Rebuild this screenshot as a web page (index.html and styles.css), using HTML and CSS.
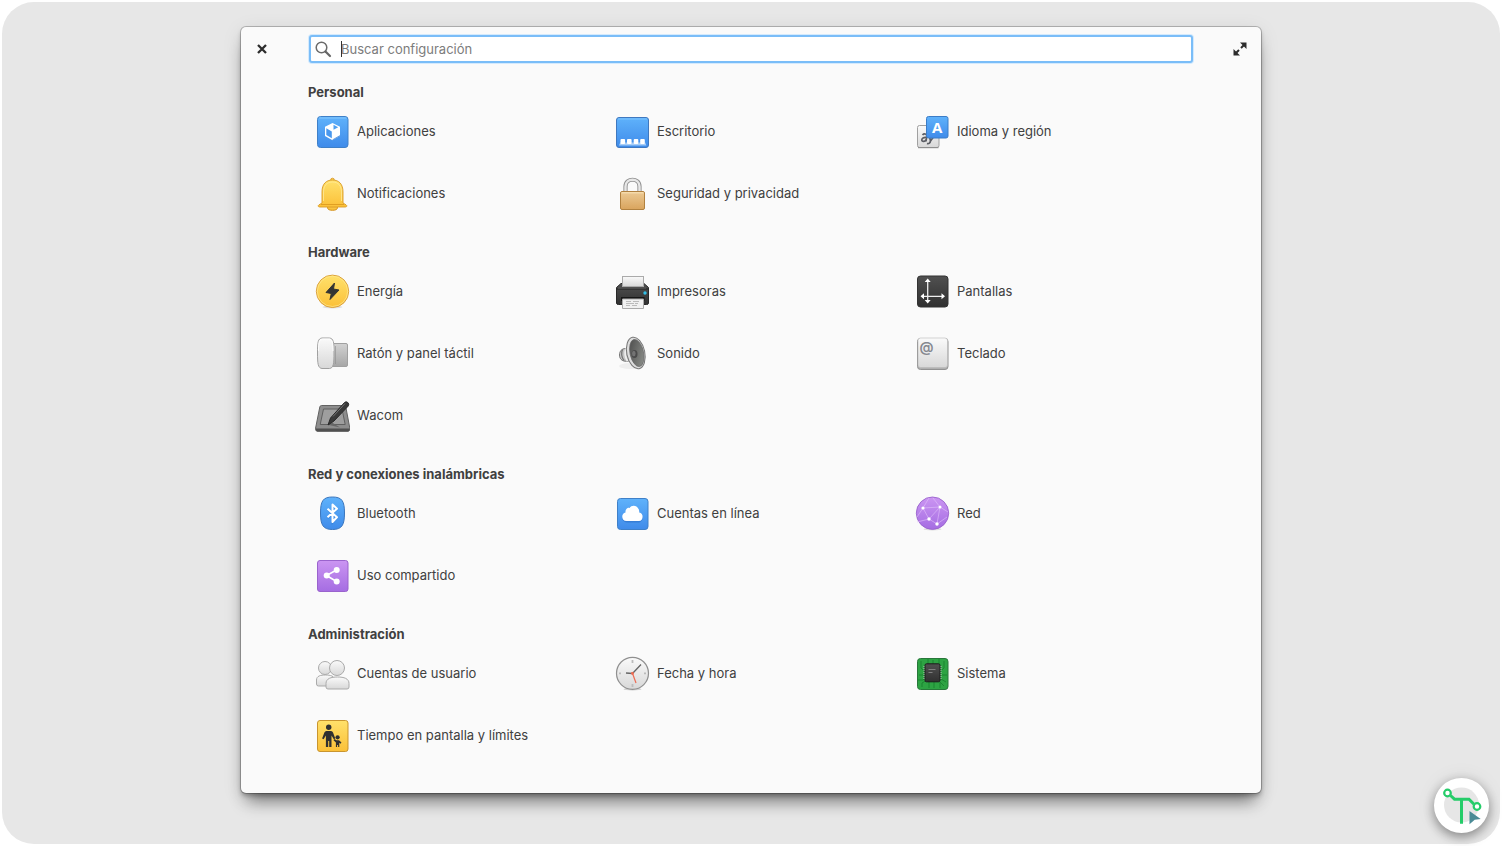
FILE: index.html
```html
<!DOCTYPE html>
<html lang="es">
<head>
<meta charset="utf-8">
<meta name="viewport" content="width=device-width, initial-scale=1">
<title>Configuración del sistema</title>
<link rel="stylesheet" href="styles.css">
</head>
<body>
<svg class="defs" width="0" height="0" aria-hidden="true">
  <defs>
    <linearGradient id="blue" x1="0" y1="0" x2="0" y2="1"><stop offset="0" stop-color="#5fb2fb"/><stop offset="1" stop-color="#3f8bea"/></linearGradient>
    <linearGradient id="yellow" x1="0" y1="0" x2="0" y2="1"><stop offset="0" stop-color="#ffe16b"/><stop offset="1" stop-color="#fbc038"/></linearGradient>
    <linearGradient id="purple" x1="0" y1="0" x2="0" y2="1"><stop offset="0" stop-color="#cb95f2"/><stop offset="1" stop-color="#a56de2"/></linearGradient>
    <linearGradient id="light" x1="0" y1="0" x2="0" y2="1"><stop offset="0" stop-color="#fafafa"/><stop offset="1" stop-color="#d8d8d8"/></linearGradient>
    <linearGradient id="grey" x1="0" y1="0" x2="0" y2="1"><stop offset="0" stop-color="#d2d2d2"/><stop offset="1" stop-color="#a6a6a6"/></linearGradient>
    <linearGradient id="dark" x1="0" y1="0" x2="0" y2="1"><stop offset="0" stop-color="#505050"/><stop offset="1" stop-color="#303030"/></linearGradient>
    <linearGradient id="brass" x1="0" y1="0" x2="0" y2="1"><stop offset="0" stop-color="#ecca95"/><stop offset="1" stop-color="#d9a45d"/></linearGradient>
    <linearGradient id="cone" x1="0" y1="0" x2="1" y2="1"><stop offset="0" stop-color="#494949"/><stop offset="1" stop-color="#929590"/></linearGradient>
  </defs>
</svg>
<div class="desktop">
  <div class="window">
    <header class="titlebar">
      <button class="window-button" type="button" aria-label="Cerrar">
        <svg width="12" height="12" viewBox="0 0 12 12"><path d="M2 2l8 8M10 2l-8 8" stroke="#2c2c2c" stroke-width="2.3"/></svg>
      </button>
      <label class="search">
        <svg width="18" height="18" viewBox="0 0 18 18" aria-hidden="true"><circle cx="7.500" cy="7.500" r="5.300" fill="none" stroke="#6b6b6b" stroke-width="1.500"/><path d="M11.500 11.500l4.500 4.500" stroke="#666" stroke-width="2.200" stroke-linecap="round"/></svg>
        <span class="field"><input type="text" placeholder="Buscar configuración" aria-label="Buscar configuración"></span>
      </label>
      <button class="window-button window-button-end" type="button" aria-label="Maximizar">
        <svg width="14" height="14" viewBox="0 0 14 14"><path d="M7 .5H13.500V7zM.5 7V13.500H7z" fill="#2c2c2c"/><path d="M8 6l3-3M6 8l-3 3" stroke="#2c2c2c" stroke-width="2"/></svg>
      </button>
    </header>
    <main class="categories">
      <section class="category">
        <h2>Personal</h2>
        <div class="items">
          <a class="item" href="#aplicaciones"><svg class="icon" viewBox="0 0 36 36"><rect x="3.500" y="3.500" width="30.500" height="31" rx="3" fill="url(#blue)" stroke="#3f80c8"/><path d="M5 5h27.500" stroke="#8fceff" stroke-width=".8"/><path d="M18.500 10l7.500 3.700v9.200l-7.500 4.400-7.500-4.400v-9.200z" fill="#fff"/><path d="M12.300 15.200l5.500 3.200v6.800l-5.500-3.200z" fill="#4a98ee"/><path d="M19.500 11.800l4.700 2.400-4.700 2.600z" fill="#4fa0f1"/><path d="M18.500 26.900l7.500-4.300" stroke="#2f76cc" stroke-width=".7"/></svg>Aplicaciones</a>
          <a class="item" href="#escritorio"><svg class="icon" viewBox="0 0 36 36"><rect x="2.500" y="4.500" width="32" height="30" rx="2.500" fill="url(#blue)" stroke="#3f78bf"/><path d="M4 6h29" stroke="#87c9ff" stroke-width=".8"/><path d="M5 32.500l1.200-3h25l1.200 3z" fill="#a6cdf8"/><g fill="#fff"><rect x="6.500" y="26" width="4.600" height="5" rx="1"/><rect x="13" y="26" width="4.600" height="5" rx="1"/><rect x="19.700" y="26" width="4.600" height="5" rx="1"/><rect x="26.200" y="26" width="4.600" height="5" rx="1"/></g></svg>Escritorio</a>
          <a class="item" href="#idioma"><svg class="icon" viewBox="0 0 36 36"><rect x="3.500" y="12.500" width="21.500" height="22" rx="2" fill="url(#light)" stroke="#a0a0a0"/><path d="M4 34.700h20.500" stroke="#8b8b8b"/><path d="M8.500 22c1.500-1.800 4.500-1.300 4.300 1l-.8 5.500M12.500 24.500c-3-.3-4.700.6-4.700 2.500 0 2.200 3.400 1.800 4.400-.4M15.500 23.500l1 4.500 3.300-4.500M16.500 28c-.4 2.500-2 3-3.500 2.500" fill="none" stroke="#5b5d64" stroke-width="1.700"/><rect x="12.500" y="3.500" width="21.500" height="21.500" rx="2" fill="url(#blue)" stroke="#3b7cc7"/><text class="glyph-a" x="23.200" y="20" text-anchor="middle">A</text></svg>Idioma y región</a>
          <a class="item" href="#notificaciones"><svg class="icon" viewBox="0 0 36 36"><ellipse cx="18.500" cy="32.500" rx="5" ry="2.800" fill="#f9c440" stroke="#d48e15"/><circle cx="18.500" cy="5" r="1.800" fill="#ffd95b" stroke="#d48e15" stroke-width=".8"/><path d="M8 28V17C8 9 12 5 18.500 5S29 9 29 17v11l3 1.800c1.500 1 .8 2.200-.7 2.200H5.700c-1.500 0-2.200-1.200-.7-2.200z" fill="url(#yellow)" stroke="#d99a26" stroke-width=".9"/><path d="M7 29.500h23" stroke="#d9961c" stroke-width=".8"/><path d="M9.500 26v-9c0-6 3-10 9-10s9 4 9 10v9" fill="none" stroke="#ffea9a" stroke-width=".8"/></svg>Notificaciones</a>
          <a class="item" href="#seguridad"><svg class="icon" viewBox="0 0 36 36"><path d="M11.500 18v-6.500c0-9 14-9 14 0V18" fill="none" stroke="#8f8f8f" stroke-width="4.200"/><path d="M11.500 18v-6.500c0-9 14-9 14 0V18" fill="none" stroke="#e7e7e7" stroke-width="2.400"/><rect x="6.500" y="16.500" width="24" height="18" rx="1.500" fill="url(#brass)" stroke="#b1813f"/><path d="M7.500 17.800h22" stroke="#fae3b8"/></svg>Seguridad y privacidad</a>
        </div>
      </section>
      <section class="category">
        <h2>Hardware</h2>
        <div class="items">
          <a class="item" href="#energia"><svg class="icon" viewBox="0 0 36 36"><ellipse cx="18.500" cy="34" rx="10" ry="1.500" fill="#dedede"/><circle cx="18.500" cy="18.300" r="16.200" fill="url(#yellow)" stroke="#d69a35" stroke-width=".9"/><circle cx="18.500" cy="18.300" r="15.200" fill="none" stroke="#ffe991" stroke-width=".7"/><path d="M20.500 10L12 19.500l5.300 1L16 26.500l9-9.500-5.500-1z" fill="#333" stroke="#333" stroke-width="1" stroke-linejoin="round"/></svg>Energía</a>
          <a class="item" href="#impresoras"><svg class="icon" viewBox="0 0 36 36"><path d="M2.500 30V14.500L7 10.500h23l4.500 4V30q0 1.500-2 1.500h-28q-2 0-2-1.500z" fill="url(#dark)" stroke="#282828"/><rect x="8.500" y="3.500" width="21" height="10" fill="url(#light)" stroke="#aaa"/><path d="M3 16h31" stroke="#202020"/><path d="M4 15.200h28" stroke="#626262" stroke-width=".7"/><rect x="7" y="24" width="23.500" height="4" fill="#171717"/><path d="M8.500 26h21v9.500h-21z" fill="#f0f0f0" stroke="#aaa"/><path d="M12 28.500h5m2 0h6m-13 2h8m1 0h3m-12 2h4m2 0h5" stroke="#bbb"/><circle cx="31" cy="20" r="1.700" fill="#33bfe7"/></svg>Impresoras</a>
          <a class="item" href="#pantallas"><svg class="icon" viewBox="0 0 36 36"><rect x="3.500" y="3" width="30.500" height="31" rx="3" fill="url(#dark)" stroke="#333"/><path d="M13.700 8v21M8.500 23.300h21" stroke="#eee" stroke-width="1.300"/><path d="M13.700 5.500l3 3.500h-6zM13.700 30.500l3-3.500h-6zM6.500 23.300l3.500-3v6zM31 23.300l-3.500-3v6z" fill="#fff"/></svg>Pantallas</a>
          <a class="item" href="#raton"><svg class="icon" viewBox="0 0 36 36"><rect x="15" y="8.500" width="18.500" height="23" rx="1.500" fill="url(#grey)" stroke="#a0a0a0"/><path d="M21.500 11v18" stroke="#8e8e8e" opacity=".6"/><path d="M3.500 18C3.500 7 4 3.500 8 3h7.500C19.500 3.500 20 7 20 18s-.5 15-4.500 15.500H8C4 33 3.500 29 3.500 18z" fill="url(#light)" stroke="#a0a0a0"/><path d="M4.500 16c0-9 .8-11.500 4-12h6.500c3.200.5 4 3 4 12" fill="none" stroke="#fff" stroke-width=".9"/></svg>Ratón y panel táctil</a>
          <a class="item" href="#sonido"><svg class="icon" viewBox="0 0 36 36"><ellipse cx="16" cy="31" rx="11" ry="3" fill="#eee"/><path d="M5.500 20c0-4 2.500-6.500 6-6.500l5-5 4 21-6-3.500c-5 1-9-1-9-6z" fill="#c4c4c4" stroke="#767676"/><path d="M8.500 14.500c-1.500 3.500-1 7.500 1.500 11" fill="none" stroke="#777" stroke-width="1.300"/><path d="M12 13.500c-1.500 4.500-1 8.500 1.500 12.500" fill="none" stroke="#efefef" stroke-width="1.800"/><ellipse cx="21.800" cy="18" rx="9" ry="16" transform="rotate(-12 21.800 18)" fill="#ddd" stroke="#777"/><ellipse cx="22.800" cy="18" rx="6.800" ry="13.800" transform="rotate(-12 22.800 18)" fill="url(#cone)" stroke="#666" stroke-width=".7"/><ellipse cx="20.500" cy="19" rx="3" ry="4" fill="#4a4a4a"/><ellipse cx="19.800" cy="18.500" rx="1.800" ry="2.700" fill="#737373"/></svg>Sonido</a>
          <a class="item" href="#teclado"><svg class="icon" viewBox="0 0 36 36"><rect x="3.500" y="3.500" width="30.500" height="31" rx="3" fill="#b0b0b0" stroke="#929292"/><rect x="4" y="3" width="29.500" height="29.500" rx="2.500" fill="url(#light)" stroke="#b8b8b8" stroke-width=".6"/><text class="glyph-at" x="12.500" y="17" text-anchor="middle">@</text></svg>Teclado</a>
          <a class="item" href="#wacom"><svg class="icon" viewBox="0 0 36 36"><path d="M7.500 8.500h22.500q1.500 0 1.800 1.500l4 21q.2 3.200-1.600 3.200H3.200q-2 0-1.600-3.200l4.200-21q.3-1.500 1.700-1.500z" fill="#8d8d8d" stroke="#626262"/><path d="M2 31.500h33.500v1.300q0 1.700-1.500 1.700H3.500Q2 34.500 2 32.800z" fill="#505050"/><path d="M9.500 12h18.500l3.200 15.500h-25z" fill="#9e9e9e" stroke="#606060"/><path d="M15 28l11 2.500-8-5z" fill="#666"/><path d="M14 28l2.500-7L30.500 5.500q1.500-1.500 3.300 0t.2 3.800L20 24z" fill="#393939" stroke="#292929"/><path d="M19 19.500L31 6.500" stroke="#747474"/></svg>Wacom</a>
        </div>
      </section>
      <section class="category">
        <h2>Red y conexiones inalámbricas</h2>
        <div class="items">
          <a class="item" href="#bluetooth"><svg class="icon" viewBox="0 0 36 36"><path d="M6.500 18C6.500 6 9 2 18.500 2s12 4 12 16-2.500 16.500-12 16.500S6.500 30 6.500 18z" fill="url(#blue)" stroke="#3b76bd"/><path d="M13.500 14.700l9.500 8.600-4.500 4.700V10.500l4.500 4.300-9.500 8.500" fill="none" stroke="#2b71bf" stroke-width="1.800" opacity=".35"/><path d="M13.500 13.700l9.500 8.600-4.500 4.700V9.500l4.500 4.300-9.500 8.500" fill="none" stroke="#fff" stroke-width="2" stroke-linejoin="round"/></svg>Bluetooth</a>
          <a class="item" href="#cuentas-en-linea"><svg class="icon" viewBox="0 0 36 36"><rect x="3.500" y="3.500" width="30.500" height="31" rx="3" fill="url(#blue)" stroke="#3f80c8"/><path d="M13 27.500c-6 0-6-8-1.200-8.500C11.500 14 16 11 19 13c4.500-.5 6.500 2.500 6.300 5.500C30 19 29.500 27.500 24.500 27.500z" fill="#2b70c7" opacity=".6"/><path d="M12.500 26c-5.500 0-5.500-8-1-8.500-.5-4.500 3.500-5 4-4.500 3-4.500 10-2 9.800 4.500C30 18 29.500 26 25 26z" fill="#fff"/></svg>Cuentas en línea</a>
          <a class="item" href="#red"><svg class="icon" viewBox="0 0 36 36"><ellipse cx="18.500" cy="34.200" rx="9" ry="1.200" fill="#ddd"/><circle cx="18.500" cy="18.200" r="16.200" fill="url(#purple)" stroke="#9a63cd" stroke-width=".9"/><path d="M9 13l17-1-3 17-8-5z M3 22l6-9L15 3M26 12l-7-9M26 12l8 5M15 24L26 12M15 24L3 27M23 29l10-7" fill="none" stroke="#e1c0fa" stroke-width=".6"/><g fill="#fff"><circle cx="9" cy="13" r="1.600"/><circle cx="26" cy="12" r="1.500"/><circle cx="15" cy="24" r="1.700"/><circle cx="23" cy="29" r="1.700"/></g></svg>Red</a>
          <a class="item" href="#uso-compartido"><svg class="icon" viewBox="0 0 36 36"><rect x="3.500" y="3.500" width="30.500" height="31" rx="2.500" fill="url(#purple)" stroke="#9a63cd"/><path d="M22.500 13L12.500 18.500l10 6" fill="none" stroke="#fff" stroke-width="1.600"/><g fill="#fff"><circle cx="22.700" cy="13" r="3"/><circle cx="12.700" cy="18.500" r="3"/><circle cx="22.700" cy="24.500" r="3"/></g></svg>Uso compartido</a>
        </div>
      </section>
      <section class="category">
        <h2>Administración</h2>
        <div class="items">
          <a class="item" href="#usuarios"><svg class="icon" viewBox="0 0 36 36"><g fill="url(#light)" stroke="#aaa"><path d="M2.500 29v-4c0-4 4-5 9-5s9 1 9 5v6H4.500q-2 0-2-2z"/><circle cx="11" cy="13" r="6.500"/><path d="M12 32v-3.500c0-5 5-6.500 11.500-6.500S35 23.500 35 28.500V32q0 2-2 2H14q-2 0-2-2z"/><circle cx="23" cy="13" r="7.500"/></g></svg>Cuentas de usuario</a>
          <a class="item" href="#fecha"><svg class="icon" viewBox="0 0 36 36"><ellipse cx="18.500" cy="34.200" rx="9" ry="1.200" fill="#d0d0d0"/><circle cx="18.500" cy="18.300" r="16" fill="url(#light)" stroke="#909090" stroke-width="1.200"/><path d="M18.500 5v3M18.500 29v3M5 18.300h2M30 18.300h2" stroke="#bbb" stroke-width="1.800"/><path d="M12 18l6.500.5L27 9.500" fill="none" stroke="#666" stroke-width="1.300"/><path d="M18 17l4 11" stroke="#ed6b53" stroke-width="1.200"/><circle cx="18.500" cy="18.500" r="1.400" fill="#ed6b53"/></svg>Fecha y hora</a>
          <a class="item" href="#sistema"><svg class="icon" viewBox="0 0 36 36"><rect x="3.500" y="3.500" width="30.500" height="31" rx="3" fill="#2da343" stroke="#28773a"/><path d="M7 6v7l4 4M14 4v6M19 5v5M25 4v7M30 6v7l-3 3M5 20h6M4 25h5l3-3M28 20h5M27 24l5 3M8 32v-4l5-3M15 33v-7M20 33v-6M26 33v-6l4 4" fill="none" stroke="#1b8530" stroke-width="1"/><path d="M9.500 11.500h18M9.500 13.500h18M9.500 15.500h18M9.500 17.500h18M9.500 19.500h18M9.500 21.500h18M9.500 23.500h18" stroke="#c4d4c4" stroke-width=".9"/><rect x="11" y="8.800" width="15" height="18" rx="1.500" fill="url(#dark)" stroke="#1c1c1c"/><path d="M14.500 14.500h7M14.500 17.500h4" stroke="#808080"/></svg>Sistema</a>
          <a class="item" href="#tiempo"><svg class="icon" viewBox="0 0 36 36"><rect x="3.500" y="3.500" width="30.500" height="31" rx="2.500" fill="url(#yellow)" stroke="#c9952f"/><g fill="#303030"><circle cx="14.700" cy="10.200" r="2.700"/><path d="M12.500 14h4.500q1.500 0 2 1.500l2.300 6-1.500.8-2.300-3.800V30h-2.300v-6h-1v6h-2.300V18.500l-2.300 3.800-1.500-.8 2.300-6q.5-1.500 2.100-1.500z"/><circle cx="23.600" cy="20.300" r="2.100"/><path d="M20.500 22l2 1.200h2.500l2.500 2.300-1 1.200-1.200-.9V30h-1.200v-2h-1v2h-1.200v-4.500l-2.400-2.300z"/></g></svg>Tiempo en pantalla y límites</a>
        </div>
      </section>
    </main>
  </div>
</div>
<button class="assistant" type="button" aria-label="Asistente">
  <svg width="55" height="55" viewBox="0 0 55 55"><circle cx="27.500" cy="27" r="17.500" fill="#e6e6e6"/><g fill="none" stroke="#25cc69" stroke-width="3"><path d="M16.500 17.500l4 3.700H35l5 5M27.500 21v24.800"/><circle cx="13.500" cy="15" r="3.300" fill="#fff" stroke-width="2.200"/><circle cx="43" cy="28.500" r="3.300" fill="#fff" stroke-width="2.200"/></g><path d="M35.500 33l11.200 8-6 .8-5.200 4.500z" fill="#4b8b96"/></svg>
</button>
</body>
</html>
```
FILE: styles.css
```css
* {
  box-sizing: border-box;
}

body {
  margin: 0;
  background: #fff;
  color: #404040;
  font-family: Inter, "Noto Sans", sans-serif;
  font-size: 13px;
  line-height: 16px;
}

.defs {
  position: absolute;
}

.desktop {
  display: flex;
  justify-content: center;
  align-items: flex-start;
  min-height: calc(100vh - 4px);
  margin: 2px;
  padding: 25px 16px 48px;
  border-radius: 32px;
  background: #e7e7e7;
}

.window {
  width: 100%;
  max-width: 1020px;
  border-radius: 5px;
  background: #fafafa;
  box-shadow: 0 0 0 1px rgba(0, 0, 0, 0.22), 0 3px 4px rgba(0, 0, 0, 0.25), 0 14px 16px -6px rgba(0, 0, 0, 0.45), 0 4px 20px rgba(0, 0, 0, 0.1);
}

.titlebar {
  display: grid;
  grid-template-columns: 68px 1fr 68px;
  align-items: center;
  height: 43px;
}

.window-button {
  display: grid;
  place-items: center;
  width: 24px;
  height: 24px;
  margin: 0 9px;
  padding: 0;
  border: 0;
  background: none;
}

.window-button-end {
  justify-self: end;
}

.search {
  display: flex;
  align-items: center;
  gap: 9px;
  height: 28px;
  padding: 0 3px;
  border: 2px solid #7abdf8;
  border-radius: 3px;
  background: #fff;
  box-shadow: 0 0 0 1px #d4eafd;
}

.field {
  position: relative;
  flex: 1;
}

.field::before {
  content: "";
  position: absolute;
  top: 0;
  left: 0;
  width: 1px;
  height: 16px;
  background: #333;
}

.field input {
  display: block;
  width: 100%;
  height: 16px;
  padding: 0;
  border: 0;
  outline: 0;
  background: none;
  color: inherit;
  font: inherit;
}

.field input::placeholder {
  color: #7c7c7c;
  opacity: 1;
}

.categories {
  display: grid;
  gap: 20px;
  padding: 14px 53px 27px 67px;
}

.category h2 {
  margin: 0;
  color: #404040;
  font-size: 13px;
  font-weight: 700;
  line-height: 16px;
}

.items {
  display: grid;
  grid-template-columns: repeat(3, 1fr);
}

.item {
  display: flex;
  align-items: center;
  gap: 7px;
  height: 62px;
  padding-left: 6px;
  color: inherit;
  text-decoration: none;
}

.icon {
  flex: none;
  width: 36px;
  height: 36px;
}

.glyph-a {
  fill: #fff;
  font: 700 15px "Open Sans", sans-serif;
}

.glyph-at {
  fill: #858890;
  font: 600 14px Inter, sans-serif;
}

.assistant {
  position: fixed;
  right: 13px;
  bottom: 13px;
  width: 55px;
  height: 55px;
  padding: 0;
  border: 0;
  border-radius: 50%;
  background: #fff;
  box-shadow: 0 4px 12px rgba(0, 0, 0, 0.4), 0 0 20px rgba(0, 0, 0, 0.08);
}

.assistant svg {
  display: block;
}

@media (max-width: 800px) {
  .items {
    grid-template-columns: 1fr;
  }
}
```
